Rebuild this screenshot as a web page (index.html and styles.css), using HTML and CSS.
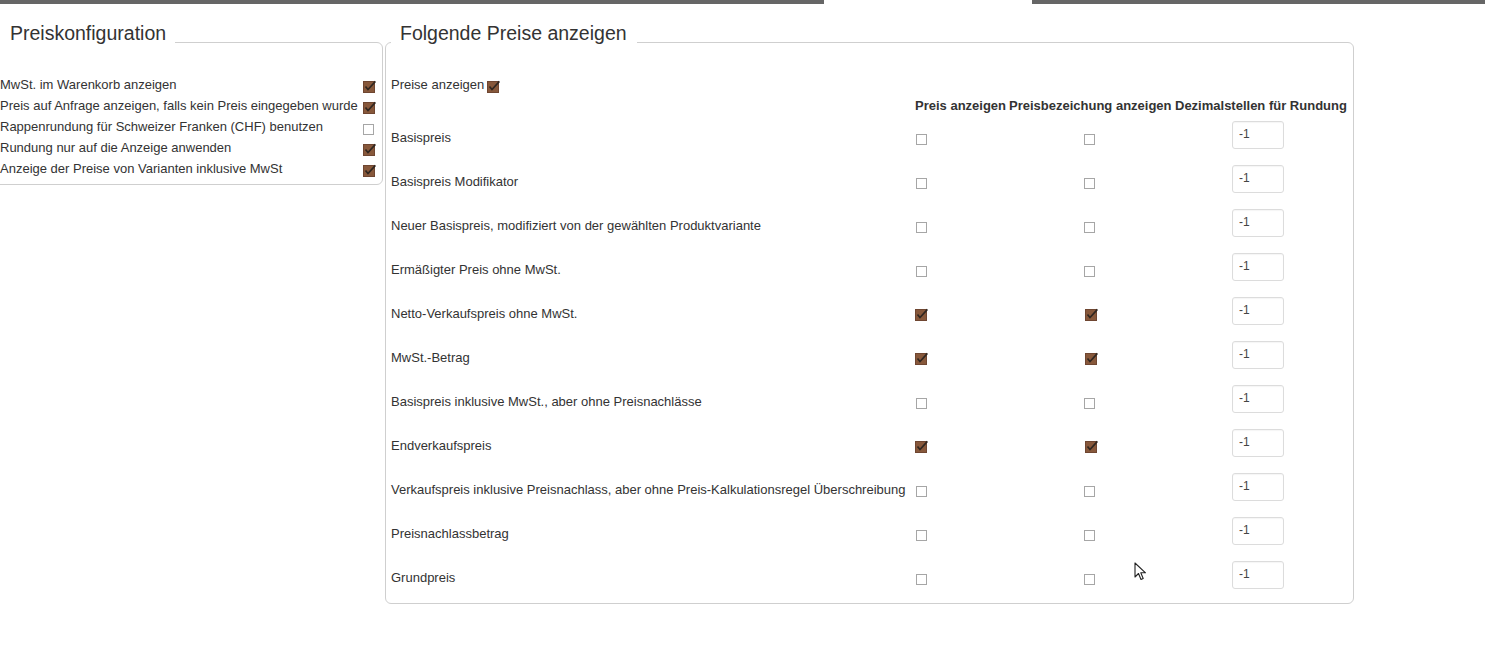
FILE: index.html
```html
<!DOCTYPE html>
<html lang="de">
<head>
<meta charset="utf-8">
<title>Preiskonfiguration</title>
<link rel="stylesheet" href="styles.css">
</head>
<body>
<div class="topbar"><span class="bar-dark bar-a"></span><span class="bar-gap"></span><span class="bar-dark bar-b"></span></div>

<div class="panels">
  <fieldset class="fs fs-config">
    <legend>Preiskonfiguration</legend>
    <div class="cfg">
      <div class="cfg-label">MwSt. im Warenkorb anzeigen</div>
      <div class="cfg-box"><span class="cb on"><svg viewBox="0 0 13 13" width="13" height="13"><rect x="0.5" y="1.5" width="11" height="11" fill="#87583b" stroke="#6f4631"/><path d="M2.5 6.4 L5 9.6 L12.4 1.4" fill="none" stroke="#2f2620" stroke-width="1.6"/></svg></span></div>
      <div class="cfg-label">Preis auf Anfrage anzeigen, falls kein Preis eingegeben wurde</div>
      <div class="cfg-box"><span class="cb on"><svg viewBox="0 0 13 13" width="13" height="13"><rect x="0.5" y="1.5" width="11" height="11" fill="#87583b" stroke="#6f4631"/><path d="M2.5 6.4 L5 9.6 L12.4 1.4" fill="none" stroke="#2f2620" stroke-width="1.6"/></svg></span></div>
      <div class="cfg-label">Rappenrundung für Schweizer Franken (CHF) benutzen</div>
      <div class="cfg-box"><span class="cb"></span></div>
      <div class="cfg-label">Rundung nur auf die Anzeige anwenden</div>
      <div class="cfg-box"><span class="cb on"><svg viewBox="0 0 13 13" width="13" height="13"><rect x="0.5" y="1.5" width="11" height="11" fill="#87583b" stroke="#6f4631"/><path d="M2.5 6.4 L5 9.6 L12.4 1.4" fill="none" stroke="#2f2620" stroke-width="1.6"/></svg></span></div>
      <div class="cfg-label">Anzeige der Preise von Varianten inklusive MwSt</div>
      <div class="cfg-box"><span class="cb on"><svg viewBox="0 0 13 13" width="13" height="13"><rect x="0.5" y="1.5" width="11" height="11" fill="#87583b" stroke="#6f4631"/><path d="M2.5 6.4 L5 9.6 L12.4 1.4" fill="none" stroke="#2f2620" stroke-width="1.6"/></svg></span></div>
    </div>
  </fieldset>

  <fieldset class="fs fs-prices">
    <legend>Folgende Preise anzeigen</legend>
    <div class="show-row">Preise anzeigen<span class="cb on inline"><svg viewBox="0 0 13 13" width="13" height="13"><rect x="0.5" y="1.5" width="11" height="11" fill="#87583b" stroke="#6f4631"/><path d="M2.5 6.4 L5 9.6 L12.4 1.4" fill="none" stroke="#2f2620" stroke-width="1.6"/></svg></span></div>
    <div class="ptable">
      <div class="th"></div>
      <div class="th">Preis anzeigen</div>
      <div class="th">Preisbezeichung anzeigen</div>
      <div class="th">Dezimalstellen für Rundung</div>

      <div class="td label">Basispreis</div>
      <div class="td c1"><span class="cb"></span></div>
      <div class="td c2"><span class="cb"></span></div>
      <div class="td c3"><input class="num" type="text" value="-1"></div>

      <div class="td label">Basispreis Modifikator</div>
      <div class="td c1"><span class="cb"></span></div>
      <div class="td c2"><span class="cb"></span></div>
      <div class="td c3"><input class="num" type="text" value="-1"></div>

      <div class="td label">Neuer Basispreis, modifiziert von der gewählten Produktvariante</div>
      <div class="td c1"><span class="cb"></span></div>
      <div class="td c2"><span class="cb"></span></div>
      <div class="td c3"><input class="num" type="text" value="-1"></div>

      <div class="td label">Ermäßigter Preis ohne MwSt.</div>
      <div class="td c1"><span class="cb"></span></div>
      <div class="td c2"><span class="cb"></span></div>
      <div class="td c3"><input class="num" type="text" value="-1"></div>

      <div class="td label">Netto-Verkaufspreis ohne MwSt.</div>
      <div class="td c1"><span class="cb on"><svg viewBox="0 0 13 13" width="13" height="13"><rect x="0.5" y="1.5" width="11" height="11" fill="#87583b" stroke="#6f4631"/><path d="M2.5 6.4 L5 9.6 L12.4 1.4" fill="none" stroke="#2f2620" stroke-width="1.6"/></svg></span></div>
      <div class="td c2"><span class="cb on"><svg viewBox="0 0 13 13" width="13" height="13"><rect x="0.5" y="1.5" width="11" height="11" fill="#87583b" stroke="#6f4631"/><path d="M2.5 6.4 L5 9.6 L12.4 1.4" fill="none" stroke="#2f2620" stroke-width="1.6"/></svg></span></div>
      <div class="td c3"><input class="num" type="text" value="-1"></div>

      <div class="td label">MwSt.-Betrag</div>
      <div class="td c1"><span class="cb on"><svg viewBox="0 0 13 13" width="13" height="13"><rect x="0.5" y="1.5" width="11" height="11" fill="#87583b" stroke="#6f4631"/><path d="M2.5 6.4 L5 9.6 L12.4 1.4" fill="none" stroke="#2f2620" stroke-width="1.6"/></svg></span></div>
      <div class="td c2"><span class="cb on"><svg viewBox="0 0 13 13" width="13" height="13"><rect x="0.5" y="1.5" width="11" height="11" fill="#87583b" stroke="#6f4631"/><path d="M2.5 6.4 L5 9.6 L12.4 1.4" fill="none" stroke="#2f2620" stroke-width="1.6"/></svg></span></div>
      <div class="td c3"><input class="num" type="text" value="-1"></div>

      <div class="td label">Basispreis inklusive MwSt., aber ohne Preisnachlässe</div>
      <div class="td c1"><span class="cb"></span></div>
      <div class="td c2"><span class="cb"></span></div>
      <div class="td c3"><input class="num" type="text" value="-1"></div>

      <div class="td label">Endverkaufspreis</div>
      <div class="td c1"><span class="cb on"><svg viewBox="0 0 13 13" width="13" height="13"><rect x="0.5" y="1.5" width="11" height="11" fill="#87583b" stroke="#6f4631"/><path d="M2.5 6.4 L5 9.6 L12.4 1.4" fill="none" stroke="#2f2620" stroke-width="1.6"/></svg></span></div>
      <div class="td c2"><span class="cb on"><svg viewBox="0 0 13 13" width="13" height="13"><rect x="0.5" y="1.5" width="11" height="11" fill="#87583b" stroke="#6f4631"/><path d="M2.5 6.4 L5 9.6 L12.4 1.4" fill="none" stroke="#2f2620" stroke-width="1.6"/></svg></span></div>
      <div class="td c3"><input class="num" type="text" value="-1"></div>

      <div class="td label">Verkaufspreis inklusive Preisnachlass, aber ohne Preis-Kalkulationsregel Überschreibung</div>
      <div class="td c1"><span class="cb"></span></div>
      <div class="td c2"><span class="cb"></span></div>
      <div class="td c3"><input class="num" type="text" value="-1"></div>

      <div class="td label">Preisnachlassbetrag</div>
      <div class="td c1"><span class="cb"></span></div>
      <div class="td c2"><span class="cb"></span></div>
      <div class="td c3"><input class="num" type="text" value="-1"></div>

      <div class="td label">Grundpreis</div>
      <div class="td c1"><span class="cb"></span></div>
      <div class="td c2"><span class="cb"></span></div>
      <div class="td c3"><input class="num" type="text" value="-1"></div>
    </div>
  </fieldset>
</div>

<svg class="cursor" width="13" height="20" viewBox="0 0 13 20"><path d="M1 1 L1 15 L4.5 11.5 L7 17.5 L9.2 16.5 L6.8 10.8 L11.5 10.8 Z" fill="#fff" stroke="#222" stroke-width="1.1" stroke-linejoin="round"/></svg>
</body>
</html>
```

FILE: styles.css
```css
html, body {
  margin: 0;
  padding: 0;
  background: #fff;
}
body {
  font-family: "Liberation Sans", Arial, sans-serif;
  font-size: 13px;
  color: #333;
  position: relative;
  min-height: 658px;
  overflow: hidden;
}

.topbar {
  display: flex;
  height: 4px;
}
.bar-dark {
  background: #666;
  height: 4px;
}
.bar-a { width: 824px; }
.bar-gap { width: 208px; }
.bar-b { flex: 1; }

.panels {
  display: flex;
  align-items: flex-start;
  margin-top: 18px;
}

.fs {
  margin: 0;
  border: 1px solid #cfcfcf;
  border-radius: 6px;
  padding: 12px 6px 5px 5px;
  min-width: 0;
  box-sizing: border-box;
}
.fs legend {
  font-size: 19.5px;
  line-height: 22px;
  color: #333;
  padding: 0 9px 18px 10px;
  margin: 0;
}
.fs-config {
  width: 389px;
  margin-left: -6px;
}
.fs-prices {
  width: 969px;
  margin-left: 2px;
  padding: 12px 3px 4px 5px;
}
.fs-prices legend {
  padding: 0 10px 18px 9px;
}

.cfg {
  display: grid;
  grid-template-columns: 1fr auto;
  grid-auto-rows: 21px;
  align-items: center;
}
.cfg-label {
  white-space: nowrap;
  line-height: 21px;
}
.cfg-box {
  display: flex;
  justify-content: flex-end;
}

.cb {
  display: inline-block;
  width: 11px;
  height: 11px;
  border: 1px solid #a6a6a6;
  box-sizing: border-box;
  background: #fff;
  margin-top: 5px;
  margin-right: 2px;
  position: relative;
}
.cb.on {
  border: 0;
  width: 13px;
  height: 13px;
  margin-right: 0;
  background: transparent;
}
.cb svg { display: block; }
.cfg-box .cb.on { margin-top: 3px; }
.cfg-box .cb { margin-right: 2px; }
.cfg-box .cb.on { margin-right: 0; }

.show-row {
  height: 21px;
  display: flex;
  align-items: center;
  white-space: nowrap;
}
.cb.inline {
  margin-left: 3px;
  margin-top: 3px;
}

.ptable {
  display: grid;
  grid-template-columns: 522px 94px 166px 1fr;
  grid-auto-rows: 44px;
  grid-template-rows: 20px;
}
.th {
  font-weight: bold;
  white-space: nowrap;
  padding-left: 2px;
  display: flex;
  align-items: center;
  color: #333;
}
.td {
  display: flex;
  align-items: center;
  white-space: nowrap;
}
.td.c1 {
  padding-left: 3px;
}
.td.c1 .cb.on { margin-top: 3px; margin-left: -1px; }
.td.c2 {
  justify-content: center;
}
.td.c2 .cb.on { margin-top: 3px; margin-left: 2px; }
.td.c3 {
  padding-left: 59px;
}
.num {
  width: 52px;
  height: 28px;
  box-sizing: border-box;
  border: 1px solid #dcdcdc;
  border-radius: 3px;
  padding: 0 6px 3px 6px;
  margin-top: -4px;
  font-family: "Liberation Sans", Arial, sans-serif;
  font-size: 12px;
  color: #444;
  background: #fff;
  outline: none;
  box-shadow: inset 0 1px 1px rgba(0,0,0,0.04);
}

.cursor {
  position: absolute;
  left: 1134px;
  top: 562px;
}
```
